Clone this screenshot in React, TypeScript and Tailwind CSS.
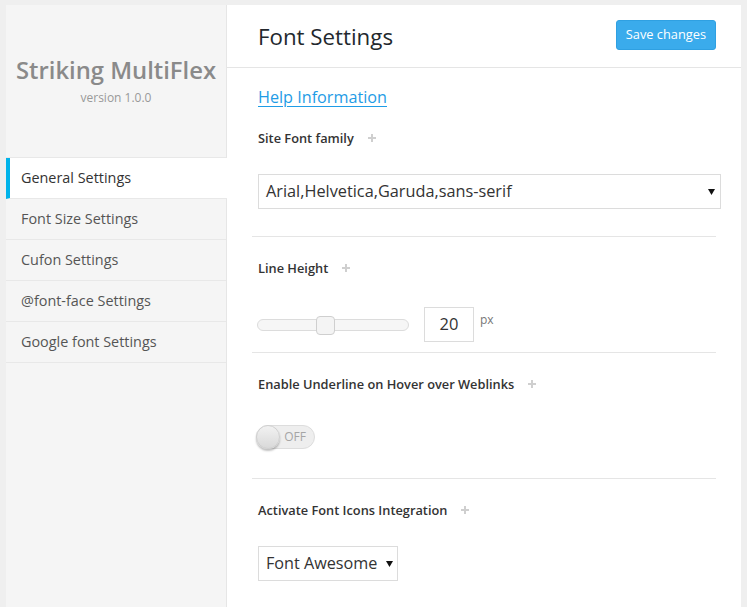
import React from "react";

const Plus = () => (
  <svg width="8" height="8" viewBox="0 0 8 8" className="ml-[14px] inline-block">
    <rect x="3" y="0" width="2" height="8" fill="#cfcfcf" />
    <rect x="0" y="3" width="8" height="2" fill="#cfcfcf" />
  </svg>
);

const Arrow = () => (
  <svg width="7" height="6" viewBox="0 0 7 6">
    <path d="M0 0 L7 0 L3.5 6 Z" fill="#111" />
  </svg>
);

const Label = ({ children }: { children: React.ReactNode }) => (
  <div className="flex items-center text-[12.8px] leading-[20px] font-semibold text-[#333] pl-[6px]">
    <span>{children}</span>
    <Plus />
  </div>
);

const Divider = () => <div className="h-px bg-[#e5e5e5]" />;

export default function App() {
  const items = [
    "General Settings",
    "Font Size Settings",
    "Cufon Settings",
    "@font-face Settings",
    "Google font Settings",
  ];
  return (
    <div
      className="min-h-screen bg-[#efefef] pl-[6px] pr-[6px] pt-[5px] flex"
      style={{ fontFamily: '"Open Sans", "Noto Sans", sans-serif' }}
    >
      <div className="flex w-[735px] min-h-[602px]">
        <aside className="w-[221px] shrink-0 bg-[#f5f5f5] border-r border-[#e6e6e6]">
          <div className="h-[152px] pt-[49px] text-center">
            <div className="text-[23.8px] leading-[32px] font-semibold text-[#8a8a8a]">
              Striking MultiFlex
            </div>
            <div className="mt-[3px] text-[12px] leading-[18px] text-[#999]">version 1.0.0</div>
          </div>
          <nav className="border-t border-[#e8e8e8]">
            {items.map((it, i) =>
              i === 0 ? (
                <div
                  key={it}
                  className="h-[41px] flex items-center bg-white border-b border-[#e8e8e8] border-l-[4px] border-l-[#00b3ea] pl-[11px] pb-[1px] text-[14.4px] text-[#333] -mr-px"
                >
                  {it}
                </div>
              ) : (
                <div
                  key={it}
                  className="h-[41px] flex items-center border-b border-[#e8e8e8] pl-[15px] pb-[1px] text-[14.4px] text-[#555]"
                >
                  {it}
                </div>
              )
            )}
          </nav>
        </aside>
        <main className="w-[514px] bg-white">
          <header className="h-[63px] border-b border-[#e5e5e5] flex items-center justify-between pl-[31px] pr-[25px]">
            <h1 className="text-[22.3px] leading-[30px] text-[#23282d] mt-[1px]">Font Settings</h1>
            <button className="h-[30px] px-[9px] rounded-[3px] bg-[#3aabec] border border-[#2fa0e2] text-white text-[12.8px] leading-none -mt-[3px]">
              Save changes
            </button>
          </header>
          <div className="px-[25px]">
            <div className="pt-[17px] pl-[6px]">
              <a href="#" className="text-[16.2px] leading-[24px] text-[#1f9ce6] underline underline-offset-[3px]">
                Help Information
              </a>
            </div>
            <div className="mt-[19px]">
              <Label>Site Font family</Label>
            </div>
            <div className="mt-[26px] ml-[6px] w-[463px] h-[35px] border border-[#dcdcdc] flex items-center justify-between pl-[7px] pr-[5px] text-[16.3px] text-[#333]">
              <span>Arial,Helvetica,Garuda,sans-serif</span>
              <Arrow />
            </div>
            <div className="mt-[27px]">
              <Divider />
            </div>
            <div className="mt-[21px]">
              <Label>Line Height</Label>
            </div>
            <div className="mt-[29px] pl-[5px] flex items-center h-[35px]">
              <div className="relative w-[152px] h-[12px] rounded-[6px] border border-[#dcdcdc] bg-[#f6f6f6]">
                <div className="absolute left-[58px] -top-[4px] w-[19px] h-[19px] rounded-[4px] border border-[#cfcfcf] bg-[#f4f4f4]" />
              </div>
              <div className="ml-[15px] w-[50px] h-[35px] border border-[#dcdcdc] flex items-center justify-center text-[16.5px] text-[#333]">
                20
              </div>
              <span className="ml-[6px] self-start mt-[4px] text-[12px] text-[#777]">px</span>
            </div>
            <div className="mt-[10px]">
              <Divider />
            </div>
            <div className="mt-[21px]">
              <Label>Enable Underline on Hover over Weblinks</Label>
            </div>
            <div className="mt-[31px] pl-[4px]">
              <div className="relative w-[59px] h-[24px] rounded-full bg-[#eeeeee] border border-[#dddddd] flex items-center justify-end pr-[8px]">
                <span className="text-[12px] text-[#a5a5a5]">OFF</span>
                <div className="absolute -left-px -top-px w-[24px] h-[24px] rounded-full bg-gradient-to-b from-[#f2f2f2] to-[#d9d9d9] border border-[#d0d0d0] shadow-[0_2px_2px_rgba(0,0,0,0.25)]" />
              </div>
            </div>
            <div className="mt-[29px]">
              <Divider />
            </div>
            <div className="mt-[21px]">
              <Label>Activate Font Icons Integration</Label>
            </div>
            <div className="mt-[26px] ml-[6px] w-[140px] h-[35px] border border-[#dcdcdc] flex items-center justify-between pl-[7px] pr-[4px] text-[16.2px] text-[#333]">
              <span>Font Awesome</span>
              <Arrow />
            </div>
          </div>
        </main>
      </div>
    </div>
  );
}
